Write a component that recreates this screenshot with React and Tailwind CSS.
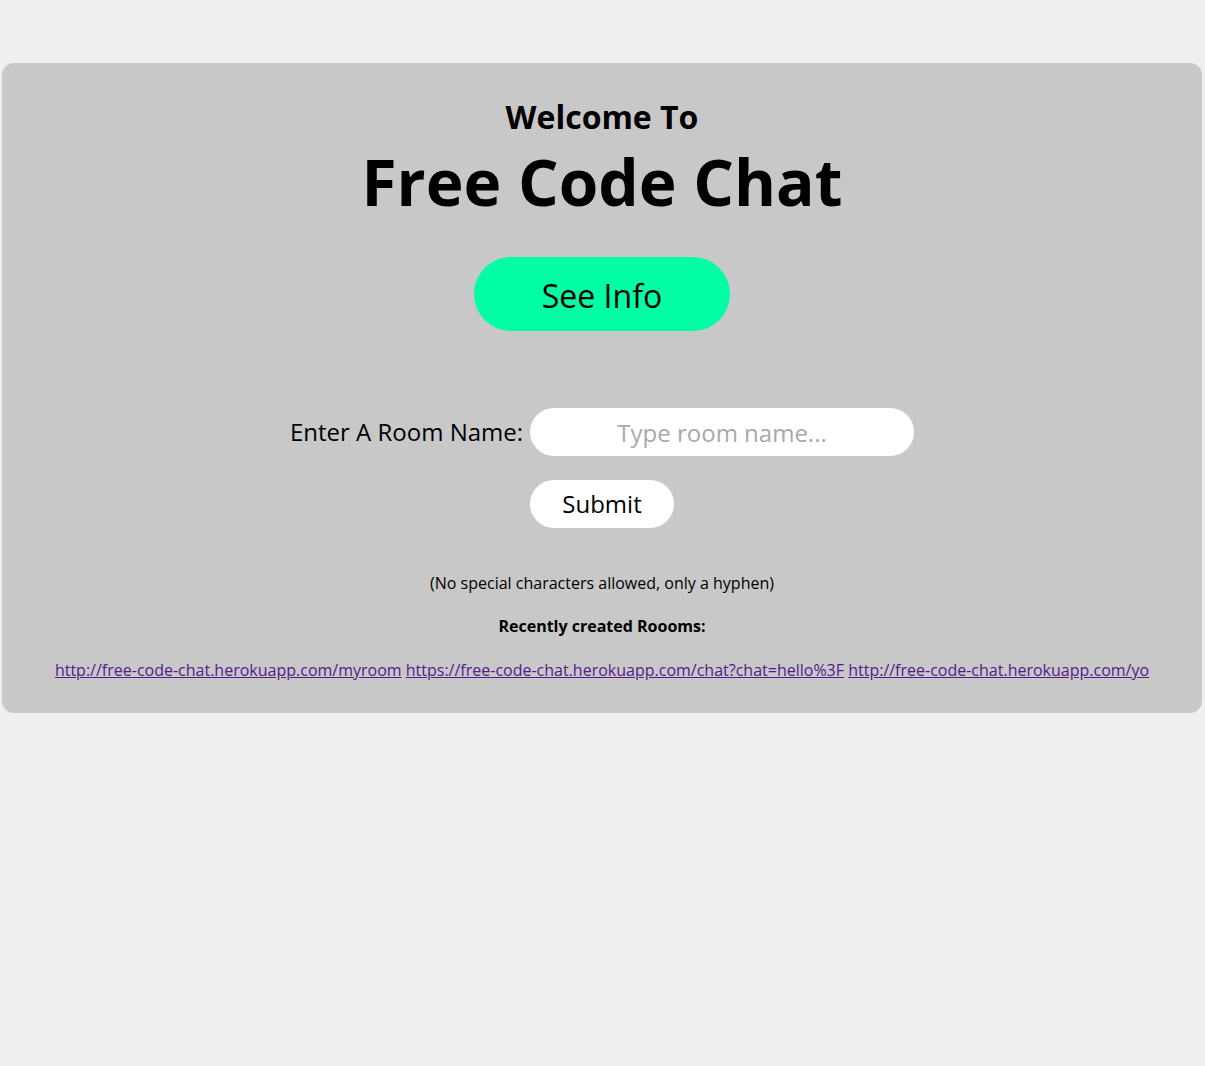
import { useState } from "react";

const rooms = [
  "http://free-code-chat.herokuapp.com/myroom",
  "https://free-code-chat.herokuapp.com/chat?chat=hello%3F",
  "http://free-code-chat.herokuapp.com/yo",
];

export default function App() {
  const [room, setRoom] = useState("");

  return (
    <div className="min-h-[1066px] bg-[#efefef] pt-[63px] font-['Open_Sans',sans-serif] text-black">
      <main className="ml-[2px] flex w-[1200px] flex-col items-center rounded-xl bg-[#c8c8c8] pt-[34px] pb-[31px] text-center">
        <h2 className="text-[32px] font-bold leading-[40px]">Welcome To</h2>
        <h1 className="mt-[9px] text-[64px] font-bold leading-[72px]">
          Free Code Chat
        </h1>

        <button
          type="button"
          className="mt-[39px] h-[74px] w-[256px] rounded-full bg-[#00fea5] pt-[3px] text-[32px] leading-none"
        >
          See Info
        </button>

        <form
          className="mt-[77px] flex flex-col items-center"
          onSubmit={(e) => e.preventDefault()}
        >
          <div className="flex items-center gap-[7px]">
            <label htmlFor="room" className="text-[24px] leading-[32px]">
              Enter A Room Name:
            </label>
            <input
              id="room"
              value={room}
              onChange={(e) => setRoom(e.target.value)}
              placeholder="Type room name..."
              className="h-[48px] w-[384px] rounded-full bg-white text-center text-[24px] outline-none placeholder:text-[#a9a9a9]"
            />
          </div>
          <button
            type="submit"
            className="mt-[24px] h-[48px] w-[144px] rounded-full bg-white text-[24px] leading-none"
          >
            Submit
          </button>
        </form>

        <p className="mt-[43px] text-[16px] leading-[24px]">
          (No special characters allowed, only a hyphen)
        </p>
        <p className="mt-[19px] text-[16px] font-bold leading-[24px]">
          Recently created Roooms:
        </p>
        <p className="mt-[20px] text-[16px] leading-[24px]">
          {rooms.map((url, i) => (
            <span key={url}>
              <a href={url} className="text-[#551a8b] underline">
                {url}
              </a>
              {i < rooms.length - 1 ? " " : ""}
            </span>
          ))}
        </p>
      </main>
    </div>
  );
}
